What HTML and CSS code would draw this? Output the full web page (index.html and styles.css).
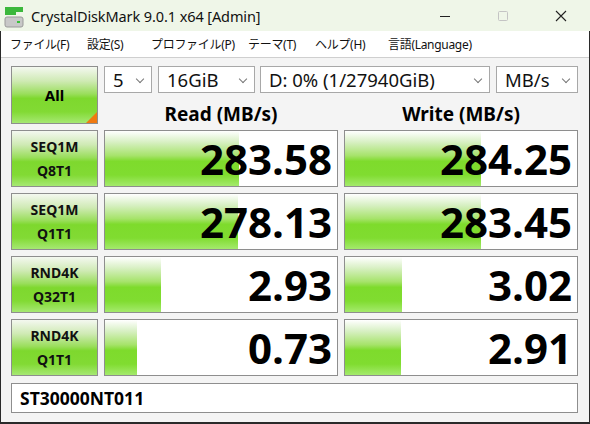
FILE: index.html
```html
<!DOCTYPE html>
<html lang="ja">
<head>
<meta charset="utf-8">
<title>CrystalDiskMark</title>
<link rel="stylesheet" href="styles.css">
</head>
<body>
<div class="window">
  <div class="titlebar">
    <svg class="appicon" width="20" height="22" viewBox="0 0 20 22">
      <rect x="1" y="1" width="18" height="5" fill="#3cb83c"/>
      <rect x="1" y="6" width="11" height="3" fill="#3cb83c"/>
      <rect x="1" y="11" width="18" height="10" rx="2" fill="#c8c8c8" stroke="#9a9a9a"/>
      <rect x="13" y="15" width="3" height="2" fill="#38c038"/>
    </svg>
    <span class="title">CrystalDiskMark 9.0.1 x64 [Admin]</span>
    <div class="controls">
      <span class="ctl"><svg width="12" height="12" viewBox="0 0 12 12"><line x1="1" y1="6.5" x2="11" y2="6.5" stroke="#222" stroke-width="1"/></svg></span>
      <span class="ctl"><svg width="12" height="12" viewBox="0 0 12 12"><rect x="1.5" y="1.5" width="9" height="9" rx="1" fill="none" stroke="#c4c4c4" stroke-width="1"/></svg></span>
      <span class="ctl"><svg width="12" height="12" viewBox="0 0 12 12"><path d="M1 1L11 11M11 1L1 11" stroke="#222" stroke-width="1.1"/></svg></span>
    </div>
  </div>
  <div class="menubar">
    <span class="m1">ファイル(F)</span>
    <span class="m2">設定(S)</span>
    <span class="m3">プロファイル(P)</span>
    <span class="m4">テーマ(T)</span>
    <span class="m5">ヘルプ(H)</span>
    <span class="m6">言語(Language)</span>
  </div>
  <div class="content">
    <div class="grid">
      <div class="btn all">All<span class="corner"></span></div>
      <div class="topright">
        <div class="selects">
          <div class="sel s1"><span>5</span><i></i></div>
          <div class="sel s2"><span>16GiB</span><i></i></div>
          <div class="sel s3"><span>D: 0% (1/27940GiB)</span><i></i></div>
          <div class="sel s4"><span>MB/s</span><i></i></div>
        </div>
        <div class="heads">
          <div class="head">Read (MB/s)</div>
          <div class="head">Write (MB/s)</div>
        </div>
      </div>

      <div class="btn label">SEQ1M<br>Q8T1</div>
      <div class="cell"><div class="bar" style="width:134px"></div><span class="val">283.58</span></div>
      <div class="cell"><div class="bar" style="width:136px"></div><span class="val">284.25</span></div>

      <div class="btn label">SEQ1M<br>Q1T1</div>
      <div class="cell"><div class="bar" style="width:133px"></div><span class="val">278.13</span></div>
      <div class="cell"><div class="bar" style="width:136px"></div><span class="val">283.45</span></div>

      <div class="btn label">RND4K<br>Q32T1</div>
      <div class="cell"><div class="bar" style="width:56px"></div><span class="val">2.93</span></div>
      <div class="cell"><div class="bar" style="width:57px"></div><span class="val">3.02</span></div>

      <div class="btn label">RND4K<br>Q1T1</div>
      <div class="cell"><div class="bar" style="width:32px"></div><span class="val">0.73</span></div>
      <div class="cell"><div class="bar" style="width:56px"></div><span class="val">2.91</span></div>
    </div>
    <div class="comment">ST30000NT011</div>
  </div>
</div>
</body>
</html>
```
FILE: styles.css
```css
* { box-sizing: border-box; }
html, body { margin: 0; padding: 0; }
body {
  width: 590px;
  height: 424px;
  overflow: hidden;
  font-family: "Noto Sans", "Noto Sans CJK JP", sans-serif;
  color: #000;
  background: #f4f4f4;
}
.window {
  width: 590px;
  height: 424px;
  display: flex;
  flex-direction: column;
  border-left: 1px solid #2a2a2a;
  border-right: 1px solid #2a2a2a;
  border-bottom: 2px solid #2a2a2a;
  background: #f4f4f4;
}
.titlebar {
  height: 31px;
  flex: none;
  display: flex;
  align-items: center;
  background: #eff6e8;
  padding-left: 4px;
  margin-left: -1px;
  margin-right: -1px;
}
.appicon { flex: none; margin-top: 2px; }
.title {
  font-family: "Noto Sans", sans-serif;
  font-size: 14.5px;
  margin-left: 7px;
  color: #111;
  letter-spacing: -0.1px;
}
.controls {
  margin-left: auto;
  display: flex;
  height: 31px;
}
.ctl {
  width: 58px;
  display: flex;
  align-items: center;
  justify-content: center;
}
.menubar {
  height: 27px;
  flex: none;
  display: flex;
  align-items: center;
  background: #fff;
  border-bottom: 1px solid #cfcfcf;
  padding-left: 9px;
  font-size: 12px;
  font-family: "Noto Sans", "Noto Sans CJK JP", sans-serif;
  color: #111;
  letter-spacing: -0.3px;
}
.menubar span { flex: none; }
.m1 { width: 77px; }
.m2 { width: 64px; }
.m3 { width: 97px; }
.m4 { width: 67px; }
.m5 { width: 73px; }
.content {
  padding: 8px 0 0 10px;
}
.grid {
  display: grid;
  grid-template-columns: 87px 234px 234px;
  grid-template-rows: 58px 57px 57px 57px 57px;
  column-gap: 6px;
  row-gap: 6px;
}
.btn {
  border: 1px solid #8e8e8e;
  background: linear-gradient(to bottom, #f4f8f0 0%, #cfeab4 25%, #9ade5c 48%, #7ed82e 56%, #82da34 80%, #a6e873 100%);
  display: flex;
  align-items: center;
  justify-content: center;
  text-align: center;
  font-weight: bold;
  position: relative;
}
.all { font-size: 15px; }
.corner {
  position: absolute;
  right: 0;
  bottom: 0;
  width: 0;
  height: 0;
  border-left: 11px solid transparent;
  border-bottom: 11px solid #f07a10;
}
.label {
  font-size: 14px;
  line-height: 24px;
  color: #111;
}
.topright {
  grid-column: 2 / 4;
  display: flex;
  flex-direction: column;
}
.selects {
  display: flex;
  height: 28px;
  gap: 6px;
}
.sel {
  border: 1px solid #a8a8a8;
  background: #fff;
  display: flex;
  align-items: center;
  padding-left: 8px;
  font-size: 18.5px;
  position: relative;
  color: #111;
}
.sel i {
  position: absolute;
  right: 8px;
  top: 9px;
  width: 6px;
  height: 6px;
  border-right: 1px solid #777;
  border-bottom: 1px solid #777;
  transform: rotate(45deg);
}
.s1 { width: 48px; }
.s2 { width: 97px; }
.s3 { width: 230px; margin-left: -1px; }
.s4 { width: 82px; }
.heads {
  display: grid;
  grid-template-columns: 234px 234px;
  column-gap: 6px;
  flex: 1;
}
.head {
  text-align: center;
  font-weight: bold;
  font-size: 19px;
  line-height: 26px;
  padding-top: 8px;
}
.cell {
  border: 1px solid #8e8e8e;
  background: #fff;
  position: relative;
  display: flex;
  align-items: center;
  justify-content: flex-end;
  padding-right: 5px;
}
.bar {
  position: absolute;
  left: 0;
  top: 0;
  bottom: 0;
  background: linear-gradient(to bottom, #ffffff 0%, #d8f0c4 20%, #a6e36a 45%, #7edb2c 55%, #80dc30 80%, #a4ea6c 100%);
}
.val {
  position: relative;
  font-family: "Open Sans", sans-serif;
  font-weight: bold;
  font-size: 42px;
  line-height: 1;
  color: #000;
}
.comment {
  margin-top: 7px;
  width: 567px;
  height: 30px;
  border: 1px solid #8e8e8e;
  background: #fff;
  display: flex;
  align-items: center;
  padding-left: 8px;
  font-weight: bold;
  font-size: 17.5px;
}
```
